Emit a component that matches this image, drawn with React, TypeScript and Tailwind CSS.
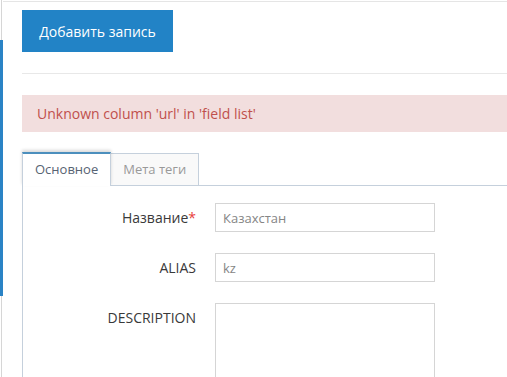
import React from 'react';

function FormRow({ label, required, children }: { label: string; required?: boolean; children: React.ReactNode }) {
  return (
    <div className="flex items-start">
      <div className="w-[173px] shrink-0 h-[29px] leading-[29px] text-right text-[14px] text-[#393939]">
        {label}
        {required && <span className="text-[#e8403a]">*</span>}
      </div>
      <div className="ml-[19px]">{children}</div>
    </div>
  );
}

export default function App() {
  return (
    <div className="w-[507px] h-[377px] overflow-hidden flex bg-white font-['Open_Sans',sans-serif]">
      {/* sidebar edge */}
      <div className="w-[3px] shrink-0 flex flex-col">
        <div className="h-[40px] w-px ml-px bg-[#d6d6d6] shrink-0"></div>
        <div className="h-[43px] w-[3px] bg-[#2a83c5] shrink-0"></div>
        <div className="h-[27px] w-[3px] bg-[#2a83c5] shrink-0"></div>
        <div className="h-[186px] w-[3px] bg-[#2a83c5] shrink-0"></div>
        <div className="flex-1 w-px ml-px bg-[#d6d6d6]"></div>
      </div>

      <div className="w-[540px] shrink-0 self-start mt-px border-t border-[#e5e5e5] pl-[19px] pt-[8px]">
        <button className="h-[42px] w-[151px] bg-[#2283c6] text-white text-[14px] flex items-center justify-center">
          Добавить запись
        </button>

        <div className="mt-[21px] h-px bg-[#e8e8e8]"></div>

        <div className="mt-[21px] h-[37px] bg-[#f2dede] text-[#c0504c] text-[14px] flex items-center pl-[15px]">
          Unknown column 'url' in 'field list'
        </div>

        {/* tabs */}
        <div className="mt-[20px] flex items-end border-b border-[#c5d0dc]">
          <div className="h-[34px] -mb-px px-3 border-x border-t-2 border-[#c5d0dc] border-t-[#4c8fbd] bg-white shadow-[0_-2px_3px_rgba(0,0,0,0.15)] relative z-10 flex items-center text-[13px] text-[#576373]">
            Основное
          </div>
          <div className="h-[32px] -ml-px px-3 border-x border-t border-[#c5d0dc] bg-[#f9f9f9] flex items-center text-[13px] text-[#999999]">
            Мета теги
          </div>
        </div>

        <div className="h-[220px] border-l border-[#c5d0dc] pt-[17px] flex flex-col gap-[21px]">
          <FormRow label="Название" required>
            <input
              readOnly
              value="Казахстан"
              className="w-[220px] h-[29px] border border-[#d5d5d5] px-[7px] text-[13px] text-[#858585] outline-none"
            />
          </FormRow>
          <FormRow label="ALIAS">
            <input
              readOnly
              value="kz"
              className="w-[220px] h-[29px] border border-[#d5d5d5] px-[7px] text-[13px] text-[#858585] outline-none"
            />
          </FormRow>
          <FormRow label="DESCRIPTION">
            <textarea
              readOnly
              className="block w-[220px] h-[100px] border border-[#d5d5d5] px-[7px] text-[13px] text-[#858585] outline-none resize-none"
            />
          </FormRow>
        </div>
      </div>
    </div>
  );
}
